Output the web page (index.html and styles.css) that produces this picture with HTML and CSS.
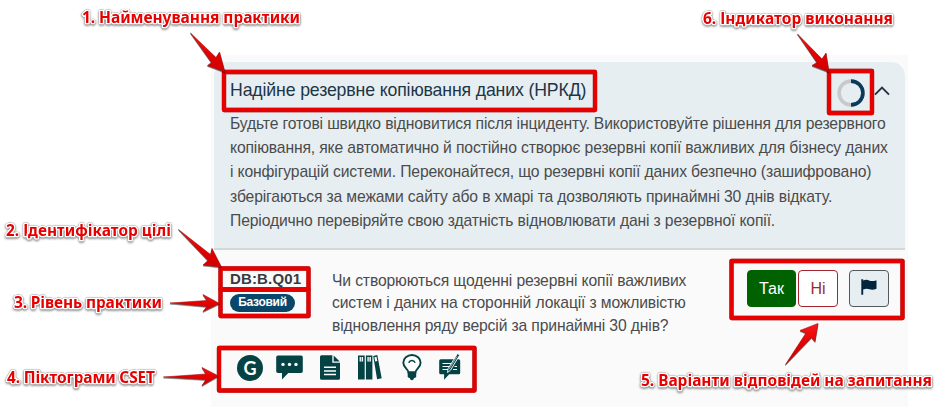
FILE: index.html
```html
<!DOCTYPE html>
<html lang="uk">
<head>
<meta charset="utf-8">
<title>Надійне резервне копіювання даних</title>
<link rel="stylesheet" href="styles.css">
</head>
<body>
<main class="panel">
  <section class="card">
    <header class="card-head">
      <h1 class="title">Надійне резервне копіювання даних (НРКД)</h1>
      <svg class="ring" viewBox="0 0 28 28"><circle cx="14" cy="14" r="11.9" fill="none" stroke="#c8c9cb" stroke-width="3.6"/><path d="M14 2.1a11.9 11.9 0 0 1 0 23.8" fill="none" stroke="#073a5b" stroke-width="3.6"/></svg>
      <svg class="chevron" viewBox="0 0 16 10"><path d="M1 8.7 8 1.6l7 7.1" fill="none" stroke="#24333f" stroke-width="1.9"/></svg>
    </header>
    <p class="description">
      <span>Будьте готові швидко відновитися після інциденту. Використовуйте рішення для резервного</span>
      <span>копіювання, яке автоматично й постійно створює резервні копії важливих для бізнесу даних</span>
      <span>і конфігурацій системи. Переконайтеся, що резервні копії даних безпечно (зашифровано)</span>
      <span>зберігаються за межами сайту або в хмарі та дозволяють принаймні 30 днів відкату.</span>
      <span>Періодично перевіряйте свою здатність відновлювати дані з резервної копії.</span>
    </p>
  </section>
  <section class="question">
    <div class="meta">
      <div class="code">DB:B.Q01</div>
      <div class="level">Базовий</div>
    </div>
    <p class="ask">
      <span>Чи створюються щоденні резервні копії важливих</span>
      <span>систем і даних на сторонній локації з можливістю</span>
      <span>відновлення ряду версій за принаймні 30 днів?</span>
    </p>
    <div class="answers">
      <button class="btn yes">Так</button>
      <button class="btn no">Ні</button>
      <button class="btn flag" aria-label="flag"><svg viewBox="0 0 16 16"><path d="M.3.3h1.9v15.4H.3zM2.2 1.5c3-1.2 4.4-.6 6 .1s3.600.8 7.300-.4v8.500c-3 1.300-5.200 1.200-7 .5s-3.500-.9-6.300.2z" fill="#04243c"/></svg></button>
    </div>
  </section>
  <div class="icons">
    <span class="glyph g-round">G</span>
    <svg class="i-chat" viewBox="0 0 27 25"><path d="M2 .5h23a1.800 1.800 0 0 1 1.800 1.800v14a1.800 1.800 0 0 1-1.800 1.800H12.300L6 24.600v-6.500H2A1.800 1.800 0 0 1 .2 16.300v-14A1.800 1.800 0 0 1 2 .5z"/><g fill="#fff"><circle cx="7" cy="9.400" r="1.700"/><circle cx="13.500" cy="9.400" r="1.700"/><circle cx="20" cy="9.400" r="1.700"/></g></svg>
    <svg class="i-doc" viewBox="0 0 20 25"><path d="M1.500.3h10.800v7.500H20v15.500a1.500 1.500 0 0 1-1.500 1.500h-17A1.500 1.500 0 0 1 0 23.300V1.800A1.500 1.500 0 0 1 1.500.3zM13.700.5l6 5.900h-6z"/><path d="M4 12.200h12M4 15.900h12M4 19.600h12" stroke="#fff" stroke-width="1.500"/></svg>
    <svg class="i-books" viewBox="0 0 24 25"><path d="M0 .5h6.700v24H0zM7.900.5h6.500v24H7.900zM15.200.9l4.100-.8 4.400 23.200-4.600 1z"/><path d="M1.600 1.900h3.500v4.600H1.600zM9.400 1.900h3.500v4.600H9.400zM16.400 2.200l2.100-.4.8 4.300-2.100.4z" fill="#fff"/><path d="M3.350 1.900v4.600M11.150 1.900v4.600" stroke="#044244" stroke-width=".7"/></svg>
    <svg class="i-bulb" viewBox="0 0 20 27"><path d="M6.500 18.500c0-3.500-5.200-4.700-5.200-9.800a8.600 7.700 0 0 1 17.300 0c0 5.100-5.200 6.300-5.200 9.800z" fill="#fff" stroke="#044244" stroke-width="1.900"/><path d="M6.700 8.800a3.400 3.400 0 0 1 6.400 0" fill="none" stroke="#044244" stroke-width="1.500"/><path d="M5.700 17.600h8.500v5.500l-1.500 1h-.8c0 1.300-.8 2.200-2 2.200s-2-.9-2-2.200h-.8l-1.400-1z"/></svg>
    <svg class="i-note" viewBox="0 0 23 28"><path d="M1.700 6.300h18a1.500 1.500 0 0 1 1.500 1.500v12a1.500 1.500 0 0 1-1.500 1.500h-9.500l-5.100 5.500v-5.500H1.700a1.500 1.500 0 0 1-1.500-1.500v-12a1.500 1.500 0 0 1 1.500-1.500z"/><path d="M3.500 10.500h9M3.500 13.500h7.200M3.500 16.500h6.200M14 16.500h4M15.500 13.500h2.500" stroke="#fff" stroke-width="1.200"/><path d="m18.500.6 2.200 1.500-9 14.900-3.200 2.500.6-4z" fill="#044244" stroke="#fff" stroke-width=".9"/><path d="m18 3.500-7.800 12.600" stroke="#fff" stroke-width=".6"/></svg>
  </div>
</main>

<svg class="callouts" viewBox="0 0 940 407">
  <defs>
    <linearGradient id="arrow" x1="0" y1="0" x2="0" y2="1"><stop offset="0" stop-color="#f51b1b"/><stop offset=".5" stop-color="#e60000"/><stop offset="1" stop-color="#cf0000"/></linearGradient>
  </defs>
  <g class="frames">
    <rect x="224" y="72" width="371" height="38"/>
    <rect x="829" y="71" width="43" height="42"/>
    <rect x="220.500" y="268.500" width="88" height="21"/>
    <rect x="220.500" y="289.500" width="88" height="26.500"/>
    <rect x="219" y="348" width="255.500" height="42.500"/>
    <rect x="731.500" y="261" width="171" height="57"/>
  </g>
  <g class="arrows" fill="url(#arrow)">
    <path d="M190.500 33 L216 57.500 L219.500 52 L225 72 L207.500 65.500 L211.500 62.500 Z"/>
    <path d="M797.500 34 L822 59 L826 53 L829 72 L812 65.500 L817 62.500 Z"/>
    <path d="M178.500 229.500 L210.500 254.500 L212 248.500 L221.500 267 L203 265 L208 260.500 Z"/>
    <path d="M170 303 L207 300.500 L203 294.500 L219.500 303.500 L203 311.500 L207 306.500 Z"/>
    <path d="M163.500 377 L206 374 L202 367.500 L218.500 376 L202 385.500 L206 379.500 Z"/>
    <path d="M785.500 364.500 L806 333 L800 330.500 L818 323.500 L815 341.500 L811.500 337.500 Z"/>
  </g>
  <g class="labels">
    <text x="82" y="22.500" textLength="218">1. Найменування практики</text>
    <text x="703" y="23.500" textLength="190">6. Індикатор виконання</text>
    <text x="6" y="235.500" textLength="165">2. Ідентифікатор цілі</text>
    <text x="14" y="308" textLength="148">3. Рівень практики</text>
    <text x="7" y="383" textLength="148">4. Піктограми CSET</text>
    <text x="641" y="386" textLength="291">5. Варіанти відповідей на запитання</text>
  </g>
</svg>
</body>
</html>
```
FILE: styles.css
```css
* { box-sizing: border-box; }
body {
  margin: 0;
  width: 940px;
  height: 407px;
  overflow: hidden;
  position: relative;
  background: #fff;
  font-family: "Liberation Sans", Arial, sans-serif;
  color: #4a4b4c;
}
h1, p { margin: 0; font-weight: 400; }
.panel {
  margin: 55px 0 0 211px;
  width: 697px;
  height: 352px;
  padding: 7px 3px 0;
  background: #fafafb;
}
.card {
  height: 188px;
  padding: 14px 15px 0 16px;
  background: #e7eef2;
  border-bottom: 2px solid #d2d7da;
  border-radius: 14px 14px 0 0;
}
.card-head { display: flex; height: 36px; align-items: flex-start; }
.title {
  flex: 1;
  font-size: 17.7px;
  letter-spacing: -0.14px;
  line-height: 28px;
  color: #1c3547;
  white-space: nowrap;
}
.ring { width: 28px; height: 28px; margin: 3px 9px 0 0; }
.chevron { width: 16px; height: 10px; margin: 10px 0 0; }
.description { font-size: 15.7px; letter-spacing: -0.14px; line-height: 24.2px; }
.description span, .ask span { display: block; white-space: nowrap; }
.question { display: flex; padding: 20px 16px 0; height: 97px; }
.meta { width: 102px; }
.code { font-size: 15px; letter-spacing: 0.15px; line-height: 18px; font-weight: 700; color: #383b3e; }
.level {
  width: 65px;
  height: 18px;
  margin-top: 6px;
  border-radius: 9px;
  background: #0a4669;
  color: #fff;
  font-size: 12px;
  letter-spacing: -0.3px;
  line-height: 17px;
  font-weight: 700;
  text-align: center;
}
.ask { width: 415px; font-size: 15.7px; letter-spacing: -0.14px; line-height: 22.5px; margin-top: -0.5px; }
.answers { display: flex; }
.btn {
  height: 37px;
  padding: 0;
  border: 1px solid;
  border-radius: 4px;
  font: 16px/35px "Liberation Sans", Arial, sans-serif;
}
.yes { width: 49px; background: #006100; border-color: #006100; color: #fff; }
.no { width: 40px; margin-left: 2px; background: #fff; border-color: #a4262c; color: #952c38; }
.flag { width: 40px; margin-left: 11px; background: #e7eef2; border-color: #53585c; display: flex; align-items: center; justify-content: center; }
.flag svg { width: 16px; height: 16px; margin-top: -3px; }
.icons { display: flex; padding-left: 23px; height: 40px; fill: #044244; margin-top: 6px; }
.glyph {
  width: 26px;
  height: 26px;
  margin-top: 2px;
  border-radius: 50%;
  background: #044244;
  color: #fff;
  font: 700 18px/26px Lato, sans-serif;
  text-align: center;
}
.i-chat { width: 27px; height: 25px; margin: 2px 0 0 13px; }
.i-doc { width: 20px; height: 25px; margin: 2px 0 0 17px; }
.i-books { width: 24px; height: 25px; margin: 2px 0 0 18px; }
.i-bulb { width: 20px; height: 27px; margin: 1px 0 0 20px; }
.i-note { width: 23px; height: 28px; margin: 0 0 0 17px; }
.callouts { position: absolute; left: 0; top: 0; width: 940px; height: 407px; }
.frames {
  fill: none;
  stroke: #e60000;
  stroke-width: 4.3px;
  stroke-linejoin: round;
  filter: drop-shadow(0 0.5px 0.5px rgba(40, 60, 60, 0.7));
}
.arrows { stroke: #a80c0c; stroke-width: 0.6px; stroke-linejoin: round; filter: drop-shadow(0.5px 1px 0.6px rgba(0, 0, 0, 0.55)); }
.labels {
  font: 700 15.5px "Noto Sans", sans-serif;
  fill: #e60000;
  stroke: #fff;
  stroke-width: 3px;
  stroke-linejoin: round;
  paint-order: stroke;
  filter: drop-shadow(0 0 0.5px rgba(0, 0, 0, 0.6)) drop-shadow(0.5px 1px 0.8px rgba(0, 0, 0, 0.5));
}
```
